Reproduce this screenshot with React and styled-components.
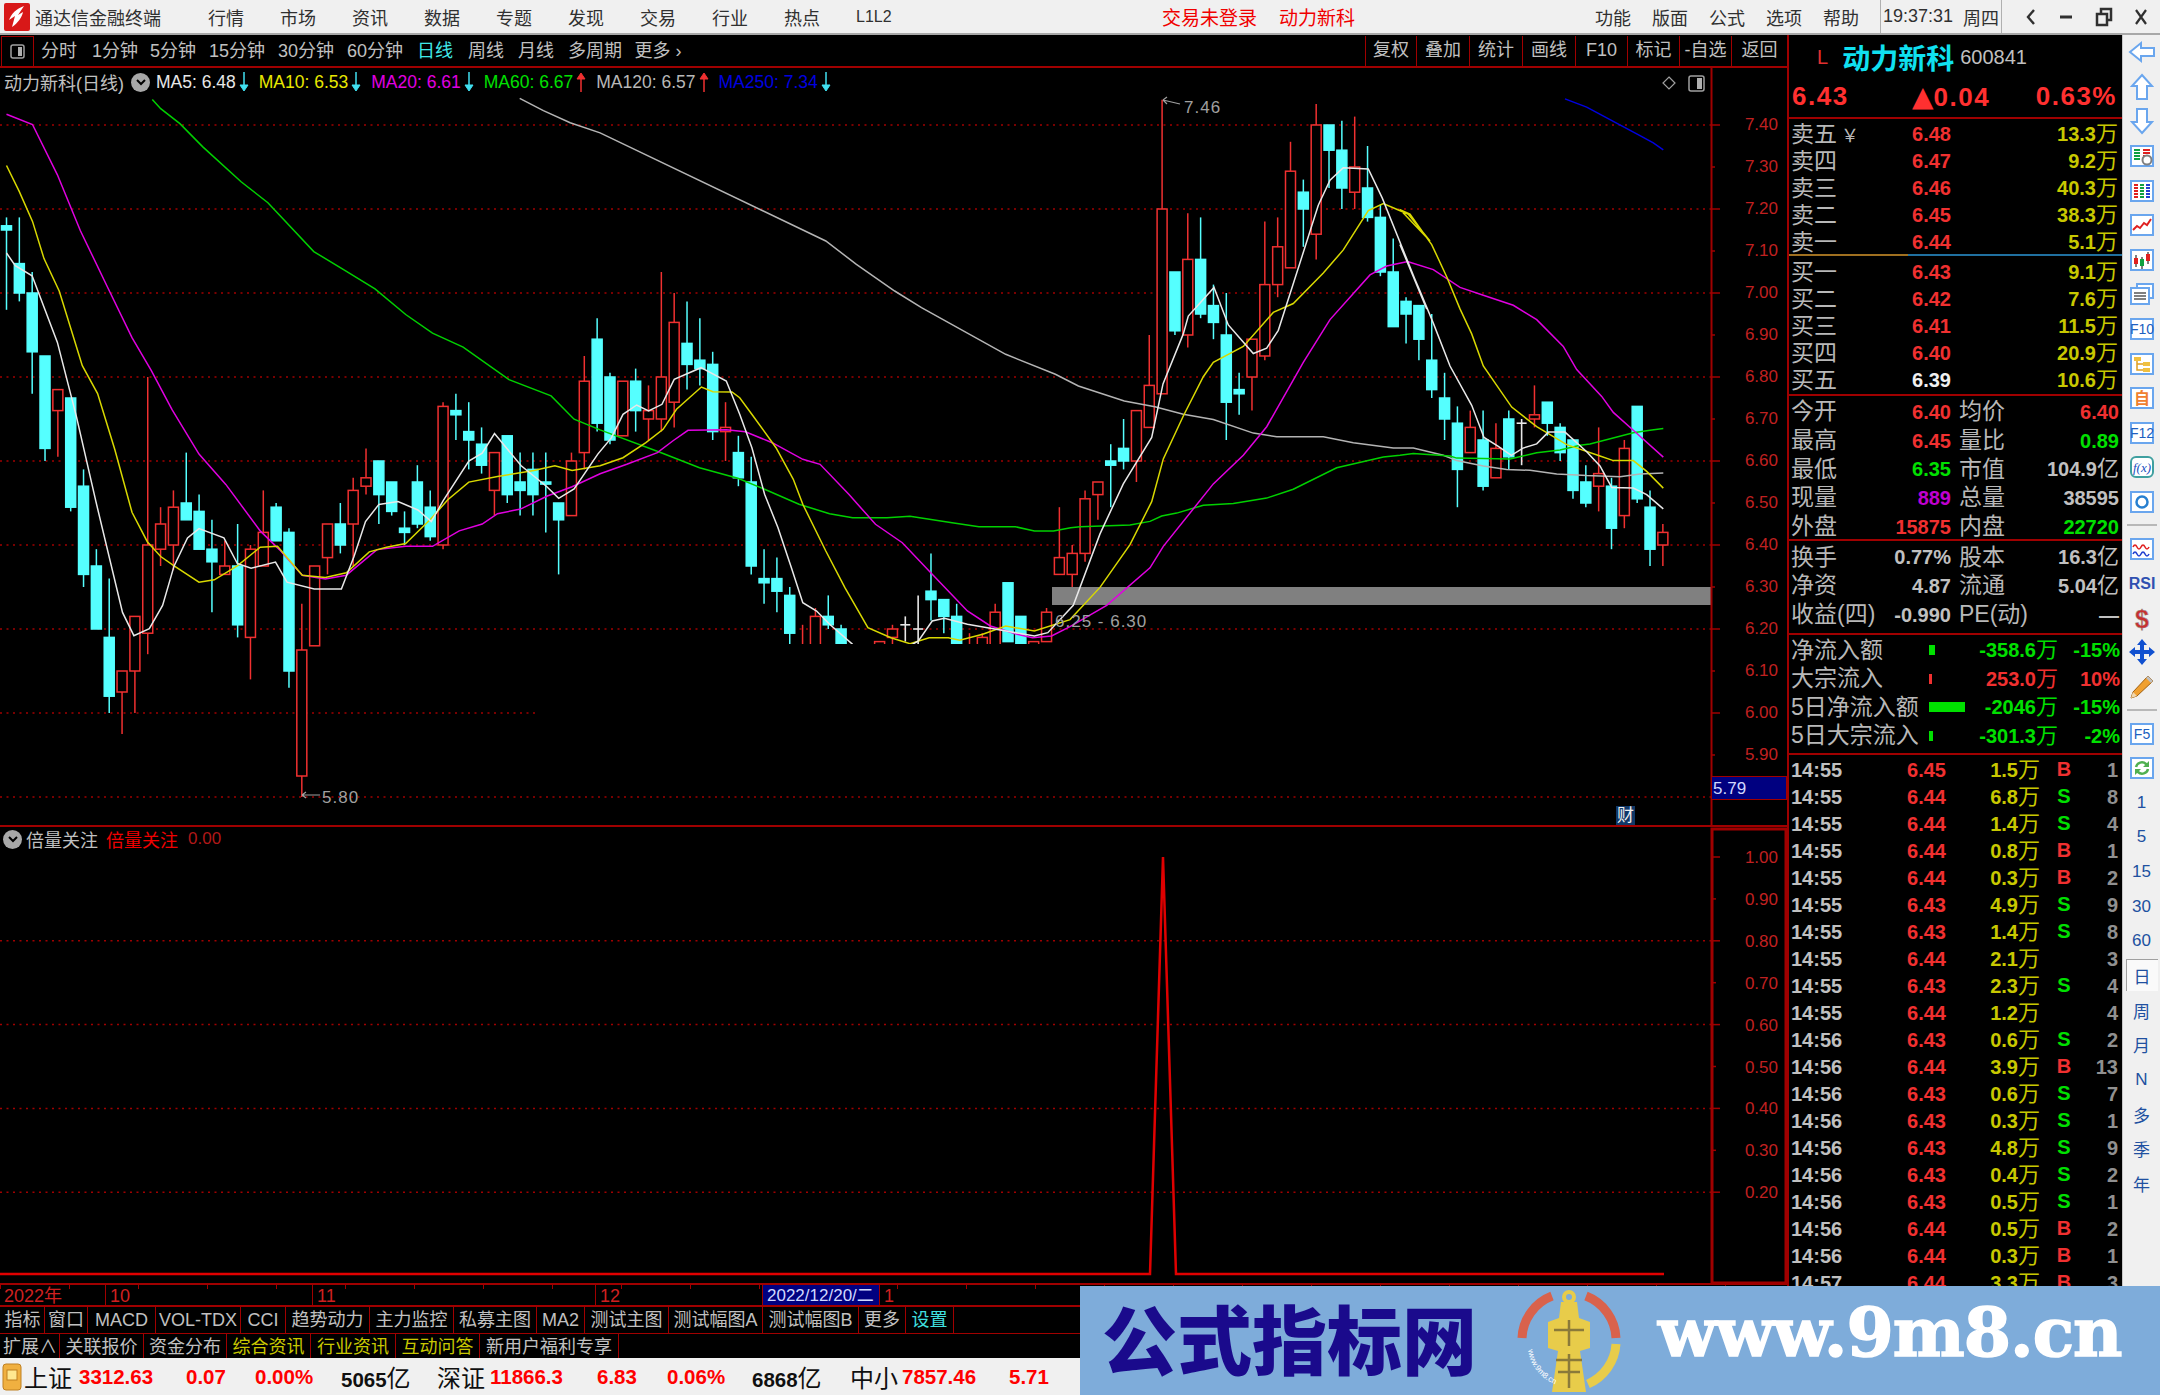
import styled, { createGlobalStyle } from 'styled-components';

const GlobalStyle = createGlobalStyle`
  html, body {
    margin: 0;
    padding: 0;
    background: #000;
  }
  body {
    font-family: "Liberation Sans", "Noto Sans CJK SC", sans-serif;
  }
`;

const RED_LINE = '#a00000';

// price chart scales
const py = (p) => 124 + (7.4 - p) * 420;
const cx = (i) => 6.5 + 12.84 * i;

// kind, high, body top, body bottom, low
const candles = [
  ['c', 7.18, 7.16, 7.15, 6.96], ['c', 7.18, 7.07, 7.0, 6.98], ['c', 7.05, 7.0, 6.86, 6.76], ['c', 6.85, 6.85, 6.63, 6.6],
  ['r', 6.77, 6.77, 6.72, 6.61], ['c', 6.75, 6.75, 6.49, 6.48], ['c', 6.58, 6.54, 6.33, 6.3], ['c', 6.39, 6.35, 6.2, 6.2],
  ['c', 6.32, 6.18, 6.04, 6.0], ['r', 6.1, 6.1, 6.05, 5.95], ['r', 6.23, 6.23, 6.1, 6.0], ['r', 6.8, 6.4, 6.19, 6.14],
  ['r', 6.49, 6.45, 6.39, 6.35], ['r', 6.53, 6.49, 6.4, 6.34], ['c', 6.62, 6.5, 6.46, 6.46], ['c', 6.52, 6.48, 6.39, 6.39],
  ['c', 6.46, 6.39, 6.36, 6.24], ['r', 6.41, 6.35, 6.33, 6.33], ['c', 6.45, 6.35, 6.21, 6.18], ['r', 6.4, 6.39, 6.18, 6.08],
  ['r', 6.53, 6.43, 6.35, 6.35], ['c', 6.5, 6.49, 6.41, 6.41], ['c', 6.44, 6.43, 6.1, 6.06], ['r', 6.26, 6.15, 5.85, 5.8],
  ['r', 6.35, 6.35, 6.16, 6.16], ['r', 6.45, 6.45, 6.37, 6.33], ['c', 6.5, 6.45, 6.4, 6.38], ['r', 6.56, 6.53, 6.45, 6.35],
  ['r', 6.63, 6.56, 6.54, 6.52], ['c', 6.6, 6.6, 6.52, 6.45], ['c', 6.55, 6.55, 6.48, 6.47], ['c', 6.48, 6.44, 6.43, 6.4],
  ['c', 6.59, 6.55, 6.45, 6.44], ['c', 6.53, 6.49, 6.42, 6.41], ['r', 6.74, 6.73, 6.4, 6.39], ['c', 6.76, 6.72, 6.71, 6.65],
  ['c', 6.74, 6.67, 6.65, 6.58], ['c', 6.68, 6.64, 6.59, 6.57], ['r', 6.62, 6.62, 6.53, 6.47], ['c', 6.66, 6.66, 6.52, 6.5],
  ['c', 6.62, 6.55, 6.53, 6.47], ['c', 6.62, 6.58, 6.52, 6.47], ['c', 6.62, 6.55, 6.545, 6.43], ['c', 6.5, 6.5, 6.46, 6.33],
  ['r', 6.62, 6.6, 6.47, 6.47], ['r', 6.85, 6.79, 6.62, 6.58], ['c', 6.94, 6.89, 6.69, 6.67], ['c', 6.81, 6.8, 6.65, 6.64],
  ['r', 6.79, 6.79, 6.66, 6.66], ['c', 6.82, 6.79, 6.72, 6.67], ['r', 6.78, 6.72, 6.7, 6.65], ['r', 7.05, 6.8, 6.7, 6.67],
  ['r', 7.0, 6.93, 6.74, 6.68], ['c', 6.98, 6.88, 6.83, 6.77], ['c', 6.94, 6.84, 6.82, 6.78], ['c', 6.86, 6.83, 6.67, 6.65],
  ['r', 6.74, 6.68, 6.67, 6.6], ['c', 6.66, 6.62, 6.56, 6.54], ['c', 6.61, 6.55, 6.35, 6.33], ['c', 6.39, 6.32, 6.31, 6.26],
  ['c', 6.37, 6.32, 6.29, 6.24], ['c', 6.3, 6.28, 6.19, 6.15], ['r', 6.21, 6.14, 6.12, 6.1], ['r', 6.25, 6.23, 6.13, 6.13],
  ['c', 6.28, 6.23, 6.21, 6.2], ['c', 6.21, 6.2, 6.12, 6.12], ['c', 6.13, 6.12, 6.1, 6.1], ['c', 6.13, 6.12, 6.1, 6.1],
  ['r', 6.17, 6.17, 6.12, 6.12], ['r', 6.21, 6.2, 6.18, 6.14], ['x', 6.23, 6.21, 6.21, 6.17], ['x', 6.28, 6.2, 6.2, 6.12],
  ['c', 6.38, 6.29, 6.27, 6.22], ['c', 6.27, 6.27, 6.23, 6.19], ['c', 6.26, 6.23, 6.13, 6.13], ['r', 6.19, 6.16, 6.15, 6.15],
  ['r', 6.19, 6.18, 6.14, 6.14], ['r', 6.26, 6.24, 6.15, 6.15], ['c', 6.31, 6.31, 6.17, 6.17], ['c', 6.23, 6.23, 6.13, 6.13],
  ['r', 6.17, 6.17, 6.14, 6.14], ['r', 6.25, 6.24, 6.17, 6.17], ['r', 6.49, 6.37, 6.33, 6.33], ['r', 6.4, 6.38, 6.33, 6.3],
  ['r', 6.53, 6.51, 6.38, 6.36], ['r', 6.55, 6.55, 6.52, 6.46], ['c', 6.64, 6.6, 6.59, 6.49], ['c', 6.7, 6.63, 6.6, 6.58],
  ['r', 6.72, 6.72, 6.6, 6.55], ['r', 6.9, 6.78, 6.68, 6.68], ['r', 7.46, 7.2, 6.76, 6.76], ['c', 7.05, 7.05, 6.91, 6.9],
  ['r', 7.19, 7.08, 6.9, 6.87], ['c', 7.18, 7.08, 6.95, 6.94], ['c', 7.02, 6.97, 6.93, 6.89], ['c', 7.0, 6.9, 6.74, 6.65],
  ['c', 6.81, 6.77, 6.76, 6.71], ['r', 6.89, 6.89, 6.8, 6.72], ['r', 7.17, 7.02, 6.85, 6.84], ['r', 7.18, 7.11, 7.02, 6.99],
  ['r', 7.36, 7.29, 7.06, 7.06], ['c', 7.27, 7.24, 7.2, 7.11], ['r', 7.45, 7.4, 7.14, 7.08], ['c', 7.4, 7.4, 7.34, 7.25],
  ['c', 7.41, 7.34, 7.25, 7.2], ['r', 7.42, 7.3, 7.24, 7.2], ['c', 7.35, 7.25, 7.18, 7.17], ['c', 7.21, 7.18, 7.05, 7.04],
  ['c', 7.13, 7.05, 6.92, 6.92], ['c', 6.99, 6.98, 6.95, 6.88], ['c', 6.97, 6.97, 6.89, 6.84], ['c', 6.95, 6.84, 6.77, 6.75],
  ['c', 6.81, 6.75, 6.7, 6.65], ['c', 6.73, 6.69, 6.58, 6.49], ['r', 6.72, 6.68, 6.62, 6.62], ['c', 6.72, 6.65, 6.54, 6.53],
  ['r', 6.69, 6.63, 6.56, 6.56], ['c', 6.72, 6.7, 6.61, 6.58], ['x', 6.7, 6.69, 6.69, 6.59], ['r', 6.78, 6.71, 6.7, 6.68],
  ['c', 6.74, 6.74, 6.69, 6.66], ['c', 6.69, 6.68, 6.62, 6.6], ['c', 6.65, 6.65, 6.53, 6.51], ['c', 6.59, 6.55, 6.5, 6.49],
  ['r', 6.68, 6.57, 6.54, 6.48], ['c', 6.56, 6.54, 6.44, 6.39], ['r', 6.65, 6.63, 6.47, 6.44], ['c', 6.73, 6.73, 6.51, 6.5],
  ['c', 6.53, 6.49, 6.39, 6.35], ['r', 6.45, 6.43, 6.4, 6.35],
];

// averages were traced from magnified crops: origin x, origin y, x scale, y scale
const trace = (ox, oy, sx, sy, pts) => pts.map(([x, y]) => [ox + x / sx, oy + y / sy]);
const A = (pts) => trace(0, 90, 2.613, 2.148, pts);
const B = (pts) => trace(600, 240, 2.613, 3, pts);
const C = (pts) => trace(1040, 90, 3, 2.8, pts);
const D = (pts) => trace(1400, 90, 3, 2.8, pts);

const averages = [
  {
    color: '#b4b4b4',
    pts: [
      ...A([[1358, 16], [1420, 42], [1490, 68], [1568, 90]]),
      ...B([[590, 0], [670, 70], [770, 150], [840, 200], [1060, 340], [1190, 400], [1250, 435], [1370, 480], [1450, 497]]),
      ...C([[430, 905], [520, 920], [640, 958], [710, 968], [850, 968], [940, 985], [1060, 1000]]),
      ...D([[0, 1000], [40, 1000], [130, 1020], [170, 1035], [250, 1050], [320, 1060], [390, 1062], [470, 1072], [560, 1077], [660, 1080], [720, 1072], [790, 1070]]),
    ],
  },
  {
    color: '#0000e0',
    pts: D([[495, 22], [560, 45], [640, 85], [720, 125], [760, 145], [790, 165]]),
  },
  {
    color: '#00d000',
    pts: [
      ...A([[398, 18], [420, 38], [470, 70], [530, 120], [630, 195], [700, 240], [820, 345], [900, 385], [980, 425], [1060, 480], [1130, 520], [1210, 550], [1330, 620], [1440, 655], [1500, 705], [1568, 728]]),
      ...B([[160, 635], [260, 680], [360, 712], [430, 745], [520, 790], [600, 818], [660, 830], [750, 830], [810, 826], [920, 845], [990, 857], [1085, 857], [1135, 870], [1185, 870], [1230, 860]]),
      ...C([[120, 1220], [270, 1215], [330, 1205], [365, 1190], [410, 1182], [490, 1160], [580, 1155], [680, 1140], [760, 1115], [890, 1055], [1030, 1025]]),
      ...D([[0, 1020], [40, 1015], [150, 1022], [170, 1028], [330, 1030], [410, 1013], [480, 1005], [540, 992], [570, 988], [700, 957], [750, 950], [790, 945]]),
    ],
  },
  {
    color: '#e000e0',
    pts: [
      ...A([[17, 50], [85, 72], [150, 180], [210, 300], [280, 420], [345, 530], [395, 600], [450, 685], [520, 780], [590, 845], [680, 945], [730, 985], [790, 1040], [850, 1048], [905, 1040], [985, 985], [1060, 978], [1130, 978], [1200, 945], [1260, 930], [1300, 908], [1360, 898], [1430, 870], [1495, 850], [1568, 822]]),
      ...B([[70, 670], [150, 635], [190, 600], [230, 568], [330, 566], [380, 572], [450, 605], [530, 655], [575, 670], [650, 760], [720, 850], [790, 905], [860, 990], [960, 1110], [1020, 1155], [1090, 1180], [1130, 1190], [1180, 1185]]),
      ...C([[90, 1500], [200, 1440], [330, 1335], [370, 1275], [520, 1100], [610, 1020], [680, 940], [790, 760], [870, 640], [990, 515], [1040, 490], [1100, 478]]),
      ...D([[25, 478], [100, 500], [180, 550], [250, 572], [340, 600], [410, 640], [490, 715], [530, 780], [605, 855], [640, 900], [700, 950], [790, 1025]]),
    ],
  },
  {
    color: '#d8d800',
    pts: [
      ...A([[17, 160], [50, 215], [85, 280], [115, 360], [155, 430], [215, 590], [255, 650], [300, 770], [345, 905], [385, 968], [420, 1000], [455, 1020], [520, 1055], [560, 1050], [620, 1020], [680, 980], [725, 978], [790, 1040], [850, 1045], [905, 1035], [965, 990], [1010, 980], [1060, 972], [1125, 920], [1170, 878], [1225, 840], [1300, 828], [1395, 815], [1450, 805], [1495, 815], [1568, 805]]),
      ...B([[60, 650], [120, 605], [165, 565], [200, 505], [265, 438], [295, 452], [345, 453], [365, 470], [400, 525], [460, 620], [505, 715], [530, 790], [590, 930], [640, 1040], [700, 1160], [760, 1190], [810, 1208], [860, 1190], [910, 1190], [940, 1198], [1000, 1180], [1060, 1155], [1135, 1170]]),
      ...C([[90, 1480], [180, 1390], [270, 1270], [335, 1150], [370, 1030], [430, 910], [490, 800], [520, 760], [610, 715], [700, 620], [760, 595], [850, 510], [910, 445], [985, 335], [1030, 315], [1105, 345], [1170, 420]]),
      ...D([[0, 332], [30, 345], [95, 430], [140, 520], [180, 610], [215, 680], [250, 770], [335, 885], [410, 940], [500, 990], [600, 1022], [640, 1035], [700, 1035], [740, 1065], [790, 1112]]),
    ],
  },
  {
    color: '#e8e8e8',
    pts: [
      ...A([[17, 348], [40, 375], [84, 397], [150, 540], [200, 700], [250, 880], [320, 1120], [350, 1170], [390, 1155], [425, 1105], [455, 1020], [490, 960], [520, 940], [585, 960], [620, 1015], [656, 1025], [720, 1012], [750, 1055], [821, 1070], [892, 1070], [925, 1000], [955, 925], [990, 888], [1040, 882], [1092, 900], [1127, 925], [1158, 880], [1225, 795], [1260, 778], [1292, 736], [1362, 805], [1429, 850], [1460, 875], [1500, 855], [1562, 780]]),
      ...B([[30, 590], [60, 520], [96, 492], [127, 510], [162, 490], [194, 415], [264, 380], [330, 420], [365, 520], [397, 620], [430, 760], [465, 860], [500, 980], [530, 1085], [566, 1110], [600, 1150], [660, 1210], [740, 1260], [832, 1200], [868, 1140], [900, 1132], [960, 1150], [1035, 1165], [1135, 1185], [1170, 1175]]),
      ...C([[100, 1440], [180, 1240], [250, 1100], [335, 970], [369, 820], [430, 680], [445, 630], [522, 550], [565, 655], [640, 735], [680, 720], [715, 670], [770, 510], [835, 320], [870, 250], [910, 215], [985, 218], [1027, 300], [1100, 470], [1160, 610]]),
      ...D([[0, 430], [60, 560], [100, 650], [150, 770], [215, 880], [252, 970], [295, 995], [334, 1020], [369, 1000], [410, 988], [445, 955], [495, 955], [560, 1010], [600, 1050], [635, 1110], [700, 1112], [740, 1130], [790, 1170]]),
    ],
  },
];

const gridPrices = [7.4, 7.2, 7.0, 6.8, 6.6, 6.4, 6.2, 6.0, 5.8];
const axisPrices = [7.4, 7.3, 7.2, 7.1, 7.0, 6.9, 6.8, 6.7, 6.6, 6.5, 6.4, 6.3, 6.2, 6.1, 6.0, 5.9];
const subValues = [1.0, 0.9, 0.8, 0.7, 0.6, 0.5, 0.4, 0.3, 0.2];
const sy = (v) => 856 + (1 - v) * 419;

const Candle = ({ i, data }) => {
  const [kind, high, top, bottom, low] = data;
  const x = cx(i);
  if (kind === 'x') {
    return (
      <g stroke="#e8e8e8" strokeWidth="1.6">
        <line x1={x} x2={x} y1={py(high)} y2={py(low)} />
        <line x1={x - 5} x2={x + 5} y1={py(top)} y2={py(top)} />
      </g>
    );
  }
  const color = kind === 'r' ? '#f03030' : '#55ffff';
  return (
    <g stroke={color} strokeWidth="1.5">
      <line x1={x} x2={x} y1={py(high)} y2={py(top)} />
      <line x1={x} x2={x} y1={py(bottom)} y2={py(low)} />
      <rect
        x={x - 5}
        y={py(top)}
        width="10"
        height={Math.max(py(bottom) - py(top), 2)}
        fill={kind === 'r' ? '#000' : color}
      />
    </g>
  );
};

const Icons = {
  left: <svg width="30" height="24" viewBox="0 0 30 24"><path d="M3 12 L14 3 V8 H27 V16 H14 V21 Z" fill="#fff" stroke="#6aa6ee" strokeWidth="2" /></svg>,
  up: <svg width="24" height="28" viewBox="0 0 24 28"><path d="M12 2 L22 13 H17 V26 H7 V13 H2 Z" fill="#fff" stroke="#6aa6ee" strokeWidth="2" /></svg>,
  down: <svg width="24" height="28" viewBox="0 0 24 28"><path d="M12 26 L22 15 H17 V2 H7 V15 H2 Z" fill="#fff" stroke="#6aa6ee" strokeWidth="2" /></svg>,
};

const Frame = ({ children }) => (
  <svg width="26" height="24" viewBox="0 0 26 24">
    <rect x="2" y="2" width="22" height="20" fill="#fff" stroke="#6aa6ee" strokeWidth="2" />
    {children}
  </svg>
);

const frameLabel = (label, color = '#2060c0') => (
  <Frame>
    <text x="13" y="17" textAnchor="middle" fontSize="14" fontFamily="Liberation Sans" fill={color}>{label}</text>
  </Frame>
);

const sideItems = [
  { id: 'left', node: Icons.left },
  { id: 'up', node: Icons.up },
  { id: 'down', node: Icons.down },
  {
    id: 'stats',
    node: (
      <Frame>
        <path d="M5 6h6M5 9h6M5 12h6M5 15h6" stroke="#10a040" strokeWidth="2" />
        <path d="M14 6h7M14 9h7M14 12h3" stroke="#e02020" strokeWidth="2" />
        <circle cx="18" cy="16" r="4.5" fill="#fff" stroke="#808080" strokeWidth="2" />
      </Frame>
    ),
  },
  {
    id: 'grid',
    node: (
      <Frame>
        <path d="M5 6h4M5 9h4M5 12h4M5 15h4M5 18h4" stroke="#e02020" strokeWidth="2" />
        <path d="M11 6h4M11 9h4M11 12h4M11 15h4M11 18h4" stroke="#10a040" strokeWidth="2" />
        <path d="M17 6h4M17 9h4M17 12h4M17 15h4M17 18h4" stroke="#2040d0" strokeWidth="2" />
      </Frame>
    ),
  },
  {
    id: 'line',
    node: <Frame><path d="M4 17 L8 13 L11 15 L15 10 L18 12 L22 6" fill="none" stroke="#e02020" strokeWidth="2" /></Frame>,
  },
  {
    id: 'kline',
    node: (
      <Frame>
        <path d="M7 7v12M13 9v12M19 4v12" stroke="#000" strokeWidth="1" />
        <rect x="5" y="10" width="4" height="6" fill="#e02020" />
        <rect x="11" y="11" width="4" height="7" fill="#10a040" />
        <rect x="17" y="6" width="4" height="7" fill="#e02020" />
      </Frame>
    ),
  },
  {
    id: 'pages',
    node: (
      <svg width="26" height="24" viewBox="0 0 26 24">
        <rect x="8" y="2" width="16" height="14" fill="#fff" stroke="#6aa6ee" strokeWidth="2" />
        <rect x="2" y="6" width="18" height="16" fill="#fff" stroke="#6aa6ee" strokeWidth="2" />
        <path d="M5 11h12M5 14h12M5 17h12" stroke="#808080" strokeWidth="2" />
      </svg>
    ),
  },
  { id: 'f10', node: frameLabel('F10') },
  {
    id: 'tree',
    node: (
      <Frame>
        <path d="M8 8v10h6M8 12h6" fill="none" stroke="#e0a020" strokeWidth="1.5" />
        <rect x="5" y="5" width="7" height="4" fill="#f0c040" />
        <rect x="14" y="10" width="7" height="4" fill="#f0c040" />
        <rect x="14" y="16" width="7" height="4" fill="#f0c040" />
      </Frame>
    ),
  },
  {
    id: 'self',
    node: (
      <Frame>
        <text x="13" y="18" textAnchor="middle" fontSize="16" fontWeight="700" fontFamily="Noto Sans CJK SC" fill="#f08030">自</text>
      </Frame>
    ),
  },
  { id: 'f12', node: frameLabel('F12') },
  {
    id: 'fx',
    node: (
      <svg width="26" height="24" viewBox="0 0 26 24">
        <rect x="2" y="2" width="22" height="20" rx="5" fill="#fff" stroke="#40a0a0" strokeWidth="2" />
        <text x="13" y="17" textAnchor="middle" fontSize="13" fontStyle="italic" fontFamily="Liberation Serif" fill="#2050c0">f(x)</text>
      </svg>
    ),
  },
  { id: 'ring', node: <Frame><circle cx="13" cy="12" r="5.5" fill="none" stroke="#2880d0" strokeWidth="2.5" /></Frame> },
  { id: 'sep1', sep: true },
  {
    id: 'wave',
    node: (
      <Frame>
        <path d="M4 10 q2 -4 4 0 t4 0 t4 0 t4 0" fill="none" stroke="#e02020" strokeWidth="1.6" />
        <path d="M4 17 q2 -4 4 0 t4 0 t4 0 t4 0" fill="none" stroke="#2040d0" strokeWidth="1.6" />
      </Frame>
    ),
  },
  {
    id: 'rsi',
    node: (
      <svg width="30" height="20" viewBox="0 0 30 20">
        <text x="15" y="16" textAnchor="middle" fontSize="16" fontWeight="700" fontFamily="Liberation Sans" fill="#3050b0">RSI</text>
      </svg>
    ),
  },
  {
    id: 'money',
    node: (
      <svg width="28" height="28" viewBox="0 0 28 28">
        <text x="14" y="24" textAnchor="middle" fontSize="25" fontWeight="700" fontFamily="Liberation Sans" fill="#c83030" stroke="#a0a0a0" strokeWidth="0.5">$</text>
      </svg>
    ),
  },
  {
    id: 'move',
    node: (
      <svg width="28" height="28" viewBox="0 0 28 28">
        <path d="M14 1l5 6h-3v5h5V9l6 5-6 5v-3h-5v5h3l-5 6-5-6h3v-5H7v3l-6-5 6-5v3h5V7H9z" fill="#1050d0" />
      </svg>
    ),
  },
  {
    id: 'pencil',
    node: (
      <svg width="28" height="28" viewBox="0 0 28 28">
        <path d="M20 3l5 5L9 23 3 25l2-6z" fill="#f0a030" stroke="#a06010" strokeWidth="1" />
        <path d="M20 3l5 5-2 2-5-5z" fill="#c0c0c0" />
        <path d="M5 19l4 4-6 2z" fill="#f0d8b0" />
      </svg>
    ),
  },
  { id: 'sep2', sep: true },
  { id: 'f5', node: frameLabel('F5') },
  {
    id: 'refresh',
    node: (
      <Frame>
        <path d="M7 11a6 6 0 0 1 10-3l2 2M19 13a6 6 0 0 1-10 3l-2-2" fill="none" stroke="#50b050" strokeWidth="2.5" />
        <path d="M20 5v6h-6M6 19v-6h6" fill="#50b050" />
      </Frame>
    ),
  },
  { id: '1', text: '1' },
  { id: '5', text: '5' },
  { id: '15', text: '15' },
  { id: '30', text: '30' },
  { id: '60', text: '60' },
  { id: 'day', text: '日', active: true },
  { id: 'week', text: '周' },
  { id: 'month', text: '月' },
  { id: 'n', text: 'N' },
  { id: 'multi', text: '多' },
  { id: 'season', text: '季' },
  { id: 'year', text: '年' },
];

const leftTools = [
  ['分时', 46], ['1分钟', 66], ['5分钟', 50], ['15分钟', 78], ['30分钟', 60], ['60分钟', 78],
  ['日线', 42, true], ['周线', 60], ['月线', 40], ['多周期', 78], ['更多 ›', 48],
];
const rightTools = [['复权', 51], ['叠加', 53], ['统计', 53], ['画线', 53], ['F10', 52], ['标记', 52], ['-自选', 52], ['返回', 56]];

const legendItems = [
  ['MA5: 6.48', '#e8e8e8', 'down'],
  ['MA10: 6.53', '#e8e800', 'down'],
  ['MA20: 6.61', '#e000e0', 'down'],
  ['MA60: 6.67', '#00e000', 'up'],
  ['MA120: 6.57', '#b8b8b8', 'up'],
  ['MA250: 7.34', '#0000e0', 'down'],
];

const sells = [
  ['卖五', '6.48', '13.3'], ['卖四', '6.47', '9.2'], ['卖三', '6.46', '40.3'], ['卖二', '6.45', '38.3'], ['卖一', '6.44', '5.1'],
];
const buys = [
  ['买一', '6.43', '9.1'], ['买二', '6.42', '7.6'], ['买三', '6.41', '11.5'], ['买四', '6.40', '20.9'], ['买五', '6.39', '10.6', '#f0f0f0'],
];

const RED = '#f03030';
const GREEN = '#00e000';
const GREY = '#c0c0c0';

const stats = [
  ['今开', '6.40', RED, '均价', '6.40', RED],
  ['最高', '6.45', RED, '量比', '0.89', GREEN],
  ['最低', '6.35', GREEN, '市值', '104.9', GREY, '亿'],
  ['现量', '889', '#c000d0', '总量', '38595', GREY],
  ['外盘', '15875', RED, '内盘', '22720', GREEN],
];
const finance = [
  ['换手', '0.77%', GREY, '股本', '16.3', GREY, '亿'],
  ['净资', '4.87', GREY, '流通', '5.04', GREY, '亿'],
  ['收益(四)', '-0.990', GREY, 'PE(动)', '—', GREY],
];
const flows = [
  ['净流入额', 6, GREEN, '-358.6', '-15%'],
  ['大宗流入', 3, RED, '253.0', '10%'],
  ['5日净流入额', 36, GREEN, '-2046', '-15%'],
  ['5日大宗流入', 4, GREEN, '-301.3', '-2%'],
];
const ticks = [
  ['14:55', '6.45', '1.5', 'B', 1], ['14:55', '6.44', '6.8', 'S', 8], ['14:55', '6.44', '1.4', 'S', 4], ['14:55', '6.44', '0.8', 'B', 1],
  ['14:55', '6.44', '0.3', 'B', 2], ['14:55', '6.43', '4.9', 'S', 9], ['14:55', '6.43', '1.4', 'S', 8], ['14:55', '6.44', '2.1', '', 3],
  ['14:55', '6.43', '2.3', 'S', 4], ['14:55', '6.44', '1.2', '', 4], ['14:56', '6.43', '0.6', 'S', 2], ['14:56', '6.44', '3.9', 'B', 13],
  ['14:56', '6.43', '0.6', 'S', 7], ['14:56', '6.43', '0.3', 'S', 1], ['14:56', '6.43', '4.8', 'S', 9], ['14:56', '6.43', '0.4', 'S', 2],
  ['14:56', '6.43', '0.5', 'S', 1], ['14:56', '6.44', '0.5', 'B', 2], ['14:56', '6.44', '0.3', 'B', 1], ['14:57', '6.44', '3.3', 'B', 3],
];

const tabsOne = [
  ['指标', 44], ['窗口', 43], ['MACD', 68], ['VOL-TDX', 85], ['CCI', 45], ['趋势动力', 84], ['主力监控', 84], ['私募主图', 83],
  ['MA2', 48], ['测试主图', 84], ['测试幅图A', 94], ['测试幅图B', 96], ['更多', 47], ['设置', 48, '#40e0e0'],
];
const OLIVE = '#c8c800';
const tabsTwo = [
  ['扩展∧', 59], ['关联报价', 84], ['资金分布', 83], ['综合资讯', 84, OLIVE], ['行业资讯', 85, OLIVE], ['互动问答', 84, OLIVE], ['新用户福利专享', 139],
];

const statusItems = [
  ['上证', 55, 'label'], ['3312.63', 107, 'red'], ['0.07', 69, 'red'], ['0.00%', 86, 'red'], ['5065', 96, 'black', '亿'],
  ['深证', 53, 'label'], ['11866.3', 107, 'red'], ['6.83', 70, 'red'], ['0.06%', 85, 'red'], ['6868', 98, 'black', '亿'],
  ['中小', 52, 'label'], ['7857.46', 107, 'red'], ['5.71', 60, 'red'],
];

const App = () => (
  <Page>
    <GlobalStyle />
    <TitleBar>
      <AppLogo viewBox="0 0 26 28">
        <rect width="26" height="28" rx="2" fill="#d81818" />
        <path d="M20 3 C12 6 8 10 5 17 L11 13 L8 24 C14 20 18 14 19 9 L14 12 Z" fill="#fff" />
      </AppLogo>
      <AppName>通达信金融终端</AppName>
      {['行情', '市场', '资讯', '数据', '专题', '发现', '交易', '行业', '热点'].map((m) => (
        <MenuItem key={m}>{m}</MenuItem>
      ))}
      <MenuItem $small>L1L2</MenuItem>
      <Alert $left={234}>交易未登录</Alert>
      <Alert $left={22}>动力新科</Alert>
      <RightMenu>
        {['功能', '版面', '公式', '选项', '帮助'].map((m) => (
          <RightMenuItem key={m}>{m}</RightMenuItem>
        ))}
      </RightMenu>
      <Clock>
        <span>19:37:31</span>
        <span>周四</span>
      </Clock>
      <WindowControls>
        <svg width="14" height="20" viewBox="0 0 14 20"><path d="M10 3 L4 10 L10 17" fill="none" stroke="#303030" strokeWidth="2.4" /></svg>
        <svg width="14" height="20" viewBox="0 0 14 20"><path d="M1 10 H13" stroke="#303030" strokeWidth="3" /></svg>
        <svg width="18" height="20" viewBox="0 0 18 20">
          <rect x="6" y="2" width="10" height="11" fill="none" stroke="#303030" strokeWidth="2.5" />
          <rect x="2" y="7" width="10" height="11" fill="#f0f0f0" stroke="#303030" strokeWidth="2.5" />
        </svg>
        <svg width="14" height="20" viewBox="0 0 14 20"><path d="M2 3 L12 17 M12 3 L2 17" stroke="#303030" strokeWidth="2.2" /></svg>
      </WindowControls>
    </TitleBar>

    <Body>
      <ChartColumn>
        <Toolbar>
          <ToggleBox>
            <svg width="15" height="15" viewBox="0 0 15 15">
              <rect x="1" y="1" width="13" height="13" rx="2" fill="none" stroke="#a0a0a0" strokeWidth="1.5" />
              <rect x="8" y="3" width="4" height="9" fill="#b0b0b0" />
            </svg>
          </ToggleBox>
          {leftTools.map(([label, w, active]) => (
            <PeriodTool key={label} $w={w} $active={active}>{label}</PeriodTool>
          ))}
          <ToolGroup>
            {rightTools.map(([label, w]) => (
              <ActionTool key={label} $w={w}>{label}</ActionTool>
            ))}
          </ToolGroup>
        </Toolbar>

        <MainPane>
          <Legend>
            <LegendName>动力新科(日线)</LegendName>
            <DropDot>
              <svg width="12" height="12" viewBox="0 0 12 12"><path d="M2 4 L6 8 L10 4" fill="none" stroke="#000" strokeWidth="2" /></svg>
            </DropDot>
            {legendItems.map(([text, color, dir]) => (
              <LegendItem key={text} $color={color}>
                {text}
                <svg width="10" height="22" viewBox="0 0 10 22">
                  {dir === 'down' ? (
                    <g stroke="#40e0f0" fill="#40e0f0"><line x1="5" x2="5" y1="1" y2="15" strokeWidth="1.5" /><path d="M1 14 H9 L5 20 Z" /></g>
                  ) : (
                    <g stroke="#f03030" fill="#f03030"><line x1="5" x2="5" y1="7" y2="21" strokeWidth="1.5" /><path d="M1 8 H9 L5 2 Z" /></g>
                  )}
                </svg>
              </LegendItem>
            ))}
          </Legend>

          <ChartSvg width="1787" height="759" viewBox="0 67 1787 759">
            {gridPrices.map((p) => (
              <line key={p} x1="0" x2="1711" y1={py(p)} y2={py(p)} stroke={RED_LINE} strokeWidth="1.5" strokeDasharray="2 4.5" />
            ))}
            <rect x="1052" y="586" width="659" height="18" fill="#808080" />
            {candles.map((c, i) => (
              <Candle key={i} i={i} data={c} />
            ))}
            {averages.map((a) => (
              <polyline
                key={a.color}
                points={a.pts.map(([x, y]) => `${x.toFixed(1)},${y.toFixed(1)}`).join(' ')}
                fill="none"
                stroke={a.color}
                strokeWidth="1.5"
              />
            ))}
            <rect x="537" y="643" width="1174" height="90" fill="#000" />

            <text x="1055" y="626" fontSize="17" letterSpacing="1" fill="#a0a0a0" fontFamily="Liberation Sans">6.25 - 6.30</text>
            <path d="M1163 99 L1180 103 M1163 99 L1167 96 M1163 99 L1167 103" fill="none" stroke="#a0a0a0" strokeWidth="1.2" />
            <text x="1184" y="112" fontSize="17" letterSpacing="1" fill="#a0a0a0" fontFamily="Liberation Sans">7.46</text>
            <path d="M302 794 L320 794 M302 794 L306 791 M302 794 L306 797" fill="none" stroke="#a0a0a0" strokeWidth="1.2" />
            <text x="322" y="802" fontSize="17" letterSpacing="1" fill="#a0a0a0" fontFamily="Liberation Sans">5.80</text>

            <path d="M1669 76 l6 6 l-6 6 l-6 -6 Z" fill="none" stroke="#a0a0a0" strokeWidth="1.2" />
            <rect x="1689" y="75" width="15" height="15" rx="2" fill="none" stroke="#a0a0a0" strokeWidth="1.5" />
            <rect x="1697" y="77" width="5" height="11" fill="#b0b0b0" />

            <line x1="1711.5" x2="1711.5" y1="67" y2="826" stroke={RED_LINE} strokeWidth="2" />
            {axisPrices.map((p, i) => (
              <g key={p}>
                <line x1="1711" x2={i % 2 ? 1715 : 1720} y1={py(p)} y2={py(p)} stroke={RED_LINE} strokeWidth="1.5" />
                <text x="1778" y={py(p) + 5} textAnchor="end" fontSize="17" fill="#c02020" fontFamily="Liberation Sans">{p.toFixed(2)}</text>
              </g>
            ))}
          </ChartSvg>

          <LastPrice>5.79</LastPrice>
          <FinanceMark>财</FinanceMark>
        </MainPane>

        <SubPane>
          <SubLegend>
            <DropDot>
              <svg width="12" height="12" viewBox="0 0 12 12"><path d="M2 4 L6 8 L10 4" fill="none" stroke="#000" strokeWidth="2" /></svg>
            </DropDot>
            <SubName>倍量关注</SubName>
            <SubValue>倍量关注</SubValue>
            <SubValue $dim>0.00</SubValue>
          </SubLegend>
          <ChartSvg width="1787" height="456" viewBox="0 826 1787 456">
            {[0.8, 0.6, 0.4, 0.2].map((v) => (
              <line key={v} x1="0" x2="1711" y1={sy(v)} y2={sy(v)} stroke={RED_LINE} strokeWidth="1.5" strokeDasharray="2 4.5" />
            ))}
            <polyline points="0,1273 1150,1273 1163,856 1176,1273 1664,1273" fill="none" stroke="#e00000" strokeWidth="2.5" />
            <rect x="1712" y="828" width="74" height="454" fill="none" stroke={RED_LINE} strokeWidth="3" />
            {subValues.map((v, i) => (
              <g key={v}>
                <line x1="1712" x2={i % 2 ? 1716 : 1720} y1={sy(v)} y2={sy(v)} stroke={RED_LINE} strokeWidth="1.5" />
                <text x="1778" y={sy(v) + 6} textAnchor="end" fontSize="17" fill="#c02020" fontFamily="Liberation Sans">{v.toFixed(2)}</text>
              </g>
            ))}
          </ChartSvg>
        </SubPane>

        <DateAxis>
          <DateCell $w={106}>2022年</DateCell>
          <DateCell $w={207}>10</DateCell>
          <DateCell $w={283}>11</DateCell>
          <DateCell $w={167}>12</DateCell>
          <DateCell $w={117} $active>2022/12/20/二</DateCell>
          <DateCell $w={60}>1</DateCell>
        </DateAxis>

        <TabRow>
          {tabsOne.map(([label, w, color]) => (
            <Tab key={label} $w={w} $color={color}>{label}</Tab>
          ))}
        </TabRow>
        <TabRow>
          {tabsTwo.map(([label, w, color]) => (
            <Tab key={label} $w={w} $color={color}>{label}</Tab>
          ))}
        </TabRow>
      </ChartColumn>

      <QuotePanel>
        <StockHead>
          <StockFlag>L</StockFlag>
          <StockName>动力新科</StockName>
          <StockCode>600841</StockCode>
        </StockHead>
        <PriceRow>
          <BigNum>6.43</BigNum>
          <BigNum><BigArrow>▲</BigArrow>0.04</BigNum>
          <BigNum $right>0.63%</BigNum>
        </PriceRow>

        <Section>
          {sells.map(([label, price, vol], i) => (
            <QuoteRow key={label}>
              <Label>{label}{i === 0 && <Yen>￥</Yen>}</Label>
              <Num $color={RED}>{price}</Num>
              <Num $color={OLIVE}>{vol}<Unit>万</Unit></Num>
            </QuoteRow>
          ))}
        </Section>
        <SplitRule />
        <Section $bottom={2}>
          {buys.map(([label, price, vol, color]) => (
            <QuoteRow key={label}>
              <Label>{label}</Label>
              <Num $color={color || RED}>{price}</Num>
              <Num $color={OLIVE}>{vol}<Unit>万</Unit></Num>
            </QuoteRow>
          ))}
        </Section>
        <Rule />

        <Section>
          {stats.map(([l1, v1, c1, l2, v2, c2, unit]) => (
            <StatRow key={l1}>
              <Label>{l1}</Label>
              <Num $color={c1}>{v1}</Num>
              <SecondLabel>{l2}</SecondLabel>
              <Num $color={c2}>{v2}{unit && <Unit>{unit}</Unit>}</Num>
            </StatRow>
          ))}
        </Section>
        <Rule />
        <Section $bottom={5}>
          {finance.map(([l1, v1, c1, l2, v2, c2, unit]) => (
            <StatRow key={l1}>
              <Label>{l1}</Label>
              <Num $color={c1}>{v1}</Num>
              <SecondLabel>{l2}</SecondLabel>
              <Num $color={c2}>{v2}{unit && <Unit>{unit}</Unit>}</Num>
            </StatRow>
          ))}
        </Section>
        <Rule />
        <Section $bottom={4}>
          {flows.map(([label, bar, color, value, pct]) => (
            <FlowRow key={label}>
              <Label>{label}</Label>
              <FlowBar $w={bar} $color={color} />
              <Num $color={color}>{value}<Unit>万</Unit></Num>
              <Num $color={color}>{pct}</Num>
            </FlowRow>
          ))}
        </Section>
        <Rule />
        <Section>
          {ticks.map(([time, price, vol, side, count], i) => (
            <TickRow key={i}>
              <Num $color={GREY} $left>{time}</Num>
              <Num $color={RED}>{price}</Num>
              <Num $color={OLIVE}>{vol}<Unit>万</Unit></Num>
              <Side $color={side === 'B' ? RED : GREEN}>{side}</Side>
              <Num $color="#909090">{count}</Num>
            </TickRow>
          ))}
        </Section>
      </QuotePanel>

      <SideBar>
        {sideItems.map((item) => {
          if (item.sep) return <SideSep key={item.id} />;
          if (item.text) return <SideText key={item.id} $active={item.active}>{item.text}</SideText>;
          return <SideIcon key={item.id}>{item.node}</SideIcon>;
        })}
      </SideBar>
    </Body>

    <StatusBar>
      <StatusIcon>
        <svg width="20" height="28" viewBox="0 0 20 28">
          <rect x="1" y="1" width="18" height="26" rx="3" fill="#f0b040" stroke="#c08020" />
          <rect x="5" y="7" width="10" height="10" fill="#ffe890" stroke="#c08020" />
        </svg>
      </StatusIcon>
      {statusItems.map(([text, w, kind, unit]) => (
        <StatusCell key={text} $w={w} $kind={kind}>
          {text}
          {unit && <StatusUnit>{unit}</StatusUnit>}
        </StatusCell>
      ))}
    </StatusBar>

    <Banner>
      <BannerTitle>公式指标网</BannerTitle>
      <BannerLogo width="110" height="106" viewBox="0 0 110 106">
        <defs>
          <path id="ring-text" d="M14 62 A44 44 0 0 0 46 98" />
        </defs>
        <path d="M8 50 A47 47 0 0 1 38 8" fill="none" stroke="#d9624c" strokeWidth="9" />
        <path d="M72 8 A47 47 0 0 1 102 50" fill="none" stroke="#d9624c" strokeWidth="9" />
        <path d="M102 56 A47 47 0 0 1 74 96" fill="none" stroke="#e8cc4a" strokeWidth="9" />
        <path d="M47 14 L63 14 L65 30 L76 34 L76 60 L66 63 L72 104 L38 104 L44 63 L34 60 L34 34 L45 30 Z" fill="#e8cc4a" />
        <circle cx="55" cy="9" r="7" fill="#e8cc4a" />
        <circle cx="55" cy="9" r="3" fill="#7eacda" />
        <path d="M40 42 H70 M55 32 V58 M42 72 H68 M44 84 H66 M55 66 V100" stroke="#8a7a3a" strokeWidth="2.5" fill="none" />
        <text fontSize="8" fill="#fff" fontFamily="Liberation Sans">
          <textPath href="#ring-text">www.9m8.cn</textPath>
        </text>
      </BannerLogo>
      <BannerUrl>www.9m8.cn</BannerUrl>
    </Banner>
  </Page>
);

export default App;

const Page = styled.div`
  position: relative;
  width: 2160px;
  height: 1395px;
  overflow: hidden;
  background: #000;
  display: flex;
  flex-direction: column;
`;

const TitleBar = styled.div`
  height: 33px;
  flex: none;
  display: flex;
  align-items: center;
  background: #f0f0f0;
  border-bottom: 2px solid #a8a8a8;
  font-size: 18px;
  color: #303030;
`;

const AppLogo = styled.svg`
  width: 26px;
  height: 28px;
  margin-left: 4px;
  flex: none;
`;

const AppName = styled.div`
  width: 178px;
  padding-left: 5px;
  box-sizing: border-box;
  white-space: nowrap;
`;

const MenuItem = styled.div`
  width: 72px;
  flex: none;
  white-space: nowrap;
  font-size: ${({ $small }) => ($small ? '16px' : '18px')};
`;

const Alert = styled.div`
  margin-left: ${({ $left }) => $left}px;
  color: #f00000;
  font-size: 19px;
  white-space: nowrap;
`;

const RightMenu = styled.div`
  margin-left: auto;
  display: flex;
`;

const RightMenuItem = styled.div`
  width: 57px;
  white-space: nowrap;
`;

const Clock = styled.div`
  width: 122px;
  height: 33px;
  box-sizing: border-box;
  display: flex;
  align-items: center;
  justify-content: space-between;
  padding: 0 2px;
  border-left: 1px solid #b0b0b0;
  border-right: 1px solid #b0b0b0;
`;

const WindowControls = styled.div`
  width: 158px;
  box-sizing: border-box;
  display: flex;
  align-items: center;
  justify-content: space-between;
  padding: 0 12px 0 22px;
`;

const Body = styled.div`
  flex: 1;
  display: flex;
  min-height: 0;
`;

const ChartColumn = styled.div`
  width: 1787px;
  flex: none;
  display: flex;
  flex-direction: column;
`;

const Toolbar = styled.div`
  height: 30px;
  flex: none;
  display: flex;
  align-items: center;
  margin-top: 1px;
  border-bottom: 2px solid ${RED_LINE};
  font-size: 18px;
  line-height: 29px;
  color: #c0c0c0;
`;

const ToggleBox = styled.div`
  width: 33px;
  height: 30px;
  margin-left: 1px;
  margin-right: 2px;
  box-sizing: border-box;
  display: flex;
  align-items: center;
  justify-content: center;
  border: 1px solid ${RED_LINE};
  border-bottom: none;
`;

const PeriodTool = styled.div`
  width: ${({ $w }) => $w}px;
  flex: none;
  height: 29px;
  text-align: center;
  white-space: nowrap;
  color: ${({ $active }) => ($active ? '#40e8e8' : 'inherit')};
`;

const ToolGroup = styled.div`
  margin-left: auto;
  display: flex;
`;

const ActionTool = styled.div`
  width: ${({ $w }) => $w}px;
  height: 30px;
  line-height: 29px;
  box-sizing: border-box;
  text-align: center;
  border-left: 1px solid ${RED_LINE};
  white-space: nowrap;
`;

const MainPane = styled.div`
  position: relative;
  height: 759px;
  flex: none;
`;

const ChartSvg = styled.svg`
  display: block;
`;

const Legend = styled.div`
  position: absolute;
  left: 4px;
  top: 2px;
  display: flex;
  align-items: center;
  height: 24px;
  font-size: 17.5px;
  white-space: nowrap;
`;

const LegendName = styled.span`
  color: #c0c0c0;
  font-size: 18px;
`;

const DropDot = styled.span`
  width: 19px;
  height: 19px;
  border-radius: 50%;
  background: #a8a8a8;
  display: inline-flex;
  align-items: center;
  justify-content: center;
  margin: 0 6px 0 7px;
`;

const LegendItem = styled.span`
  display: inline-flex;
  align-items: center;
  gap: 3px;
  margin-right: 10px;
  color: ${({ $color }) => $color};
`;

const LastPrice = styled.div`
  position: absolute;
  left: 1711px;
  top: 708px;
  width: 76px;
  height: 24px;
  line-height: 24px;
  box-sizing: border-box;
  padding-left: 1px;
  background: #000080;
  border: 1px solid ${RED_LINE};
  color: #d0d8ff;
  font-size: 17px;
`;

const FinanceMark = styled.div`
  position: absolute;
  left: 1616px;
  top: 738px;
  width: 19px;
  height: 19px;
  line-height: 19px;
  text-align: center;
  font-size: 17px;
  background: #103868;
  color: #f0f0f0;
`;

const SubPane = styled.div`
  position: relative;
  height: 456px;
  flex: none;
  border-top: 2px solid ${RED_LINE};
  margin-top: -2px;
`;

const SubLegend = styled.div`
  position: absolute;
  left: 3px;
  top: 2px;
  display: flex;
  align-items: center;
  height: 20px;
  font-size: 18px;
  white-space: nowrap;

  ${DropDot} {
    margin: 0 4px 0 0;
  }
`;

const SubName = styled.span`
  color: #c0c0c0;
  margin-right: 8px;
`;

const SubValue = styled.span`
  color: ${({ $dim }) => ($dim ? '#b01818' : '#f00000')};
  margin-right: 10px;
  font-size: ${({ $dim }) => ($dim ? '17px' : '18px')};
`;

const DateAxis = styled.div`
  height: 24px;
  flex: none;
  display: flex;
  box-sizing: border-box;
  border-top: 2px solid ${RED_LINE};
  border-bottom: 2px solid ${RED_LINE};
  font-size: 18px;
  color: #d02020;
  background-image: repeating-linear-gradient(90deg, ${RED_LINE} 0 1px, transparent 1px 69px);
  background-size: 100% 4px;
  background-repeat: no-repeat;
`;

const DateCell = styled.div`
  width: ${({ $w }) => $w}px;
  flex: none;
  box-sizing: border-box;
  padding-left: 4px;
  line-height: 22px;
  white-space: nowrap;
  border-right: 1px solid ${RED_LINE};
  background: ${({ $active }) => ($active ? '#000080' : 'transparent')};
  color: ${({ $active }) => ($active ? '#d0d8ff' : 'inherit')};
  font-size: ${({ $active }) => ($active ? '17px' : '18px')};

  &:last-child {
    border-right: none;
  }
`;

const TabRow = styled.div`
  height: 26.5px;
  flex: none;
  display: flex;
  box-sizing: border-box;
  padding-left: 1px;
  border-bottom: 1.5px solid ${RED_LINE};
`;

const Tab = styled.div`
  width: ${({ $w }) => $w}px;
  flex: none;
  box-sizing: border-box;
  text-align: center;
  line-height: 26px;
  font-size: 18px;
  white-space: nowrap;
  border-right: 1.5px solid ${RED_LINE};
  color: ${({ $color }) => $color || '#c0c0c0'};
`;

const QuotePanel = styled.div`
  width: 335px;
  flex: none;
  box-sizing: border-box;
  border-left: 2px solid ${RED_LINE};
  overflow: hidden;
  display: flex;
  flex-direction: column;
`;

const StockHead = styled.div`
  height: 41px;
  flex: none;
  box-sizing: border-box;
  padding-top: 3px;
  display: flex;
  align-items: center;
`;

const StockFlag = styled.span`
  margin-left: 28px;
  color: #e03030;
  font-size: 20px;
`;

const StockName = styled.span`
  margin-left: 14px;
  color: #10e0f0;
  font-size: 28px;
  font-weight: 700;
`;

const StockCode = styled.span`
  margin-left: 6px;
  color: #c0c0c0;
  font-size: 20px;
`;

const PriceRow = styled.div`
  height: 43px;
  flex: none;
  box-sizing: border-box;
  display: grid;
  grid-template-columns: 120px 123px 1fr;
  align-items: center;
  padding: 0 5px 0 3px;
  border-bottom: 2px solid ${RED_LINE};
`;

const BigNum = styled.span`
  color: #ff3030;
  font-size: 26px;
  font-weight: 700;
  letter-spacing: 1.5px;
  white-space: nowrap;
  text-align: ${({ $right }) => ($right ? 'right' : 'left')};
`;

const BigArrow = styled.span`
  font-size: 28px;
  letter-spacing: 0;
  font-family: "DejaVu Sans", sans-serif;
`;

const Section = styled.div`
  flex: none;
  padding-bottom: ${({ $bottom }) => $bottom || 0}px;
`;

const Rule = styled.div`
  height: 2px;
  flex: none;
  background: ${RED_LINE};
`;

const SplitRule = styled.div`
  height: 2px;
  flex: none;
  background: linear-gradient(90deg, #a07020 0 119px, #2070a0 119px);
  margin-bottom: 1px;
`;

const QuoteRow = styled.div`
  height: 27px;
  box-sizing: border-box;
  display: grid;
  grid-template-columns: 70px 90px 1fr;
  align-items: center;
  padding: 3px 4px 0 2px;
`;

const StatRow = styled.div`
  height: 28.7px;
  box-sizing: border-box;
  display: grid;
  grid-template-columns: 70px 90px 66px 1fr;
  align-items: center;
  padding: 3px 3px 0 2px;
`;

const FlowRow = styled.div`
  height: 28.5px;
  box-sizing: border-box;
  display: grid;
  grid-template-columns: 138px 36px 93px 1fr;
  align-items: center;
  padding: 3px 2px 0 2px;
`;

const TickRow = styled.div`
  height: 27px;
  box-sizing: border-box;
  display: grid;
  grid-template-columns: 70px 85px 94px 48px 1fr;
  align-items: center;
  padding: 3px 4px 0 2px;
`;

const Label = styled.span`
  color: #b8b8b8;
  font-size: 23px;
  line-height: 1;
  white-space: nowrap;
`;

const SecondLabel = styled(Label)`
  margin-left: 8px;
`;

const Yen = styled.span`
  font-size: 18px;
  margin-left: 4px;
`;

const Num = styled.span`
  color: ${({ $color }) => $color};
  font-size: 20px;
  font-weight: 700;
  text-align: ${({ $left }) => ($left ? 'left' : 'right')};
  white-space: nowrap;
  line-height: 1;
`;

const Unit = styled.span`
  font-size: 22px;
  font-weight: 400;
`;

const FlowBar = styled.span`
  display: block;
  height: 10px;
  width: ${({ $w }) => $w}px;
  background: ${({ $color }) => $color};
`;

const Side = styled.span`
  color: ${({ $color }) => $color};
  font-size: 20px;
  font-weight: 700;
  text-align: center;
`;

const SideBar = styled.div`
  width: 38px;
  flex: none;
  background: #f0f0f0;
  border-left: 1px solid #c8c8c8;
  box-sizing: border-box;
  display: flex;
  flex-direction: column;
  align-items: center;
`;

const SideIcon = styled.div`
  height: 34.6px;
  flex: none;
  display: flex;
  align-items: center;
  justify-content: center;
`;

const SideSep = styled.div`
  height: 2px;
  width: 30px;
  flex: none;
  margin: 5px 0 5px;
  background: #b8b8b8;
`;

const SideText = styled.div`
  height: ${({ $active }) => ($active ? '32px' : '34.6px')};
  margin: ${({ $active }) => ($active ? '1px 0 1.6px' : '0')};
  width: ${({ $active }) => ($active ? '32px' : 'auto')};
  flex: none;
  box-sizing: border-box;
  display: flex;
  align-items: center;
  justify-content: center;
  color: #2050a0;
  font-size: 17px;
  background: ${({ $active }) => ($active ? '#fafafa' : 'transparent')};
  border-top: ${({ $active }) => ($active ? '1px solid #a0a0a0' : 'none')};
  border-left: ${({ $active }) => ($active ? '1px solid #a0a0a0' : 'none')};
`;

const StatusBar = styled.div`
  height: 37px;
  flex: none;
  display: flex;
  align-items: center;
  background: #f0f0f0;
  white-space: nowrap;
`;

const StatusIcon = styled.div`
  width: 24px;
  flex: none;
  padding-left: 2px;
  box-sizing: border-box;
  display: flex;
`;

const StatusCell = styled.div`
  width: ${({ $w }) => $w}px;
  flex: none;
  font-size: ${({ $kind }) => ($kind === 'label' ? '24px' : '20.5px')};
  font-weight: ${({ $kind }) => ($kind === 'label' ? 400 : 700)};
  color: ${({ $kind }) => ($kind === 'red' ? '#ff0000' : '#101010')};
`;

const StatusUnit = styled.span`
  font-size: 24px;
  font-weight: 400;
`;

const Banner = styled.div`
  position: absolute;
  left: 1080px;
  top: 1286px;
  width: 1080px;
  height: 109px;
  box-sizing: border-box;
  padding-left: 22px;
  display: flex;
  align-items: center;
  background: #7eacda;
`;

const BannerTitle = styled.div`
  width: 412px;
  flex: none;
  margin-top: -8px;
  font-family: "Noto Sans CJK SC", sans-serif;
  font-size: 75px;
  font-weight: 900;
  color: #1a0a8c;
  white-space: nowrap;
`;

const BannerLogo = styled.svg`
  flex: none;
`;

const BannerUrl = styled.div`
  margin-left: 34px;
  margin-top: -18px;
  font-family: "DejaVu Serif", serif;
  font-size: 68px;
  font-weight: 700;
  color: #ffffff;
  -webkit-text-stroke: 1.5px #ffffff;
  letter-spacing: -1px;
  white-space: nowrap;
`;
